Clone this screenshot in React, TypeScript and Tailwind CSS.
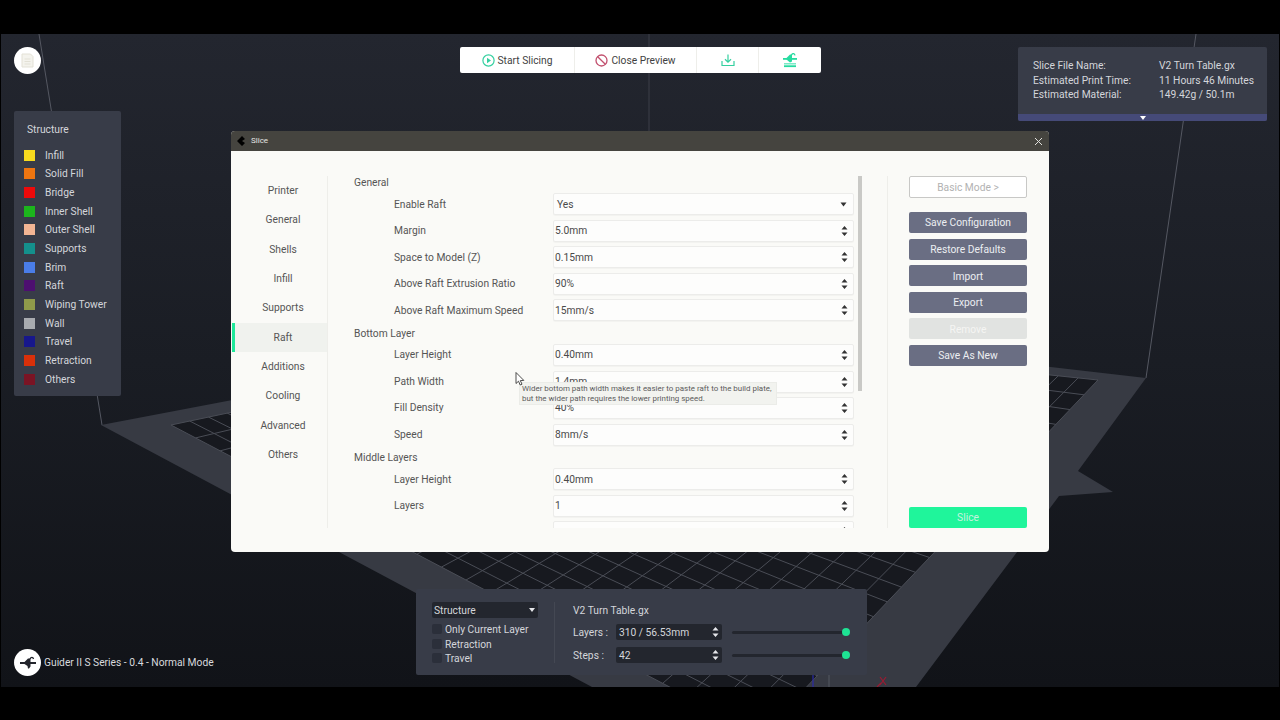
import React from "react";

const legend = [
  { name: "Infill", color: "bg-[#f7da1e]" },
  { name: "Solid Fill", color: "bg-[#ee7510]" },
  { name: "Bridge", color: "bg-[#ee0a0a]" },
  { name: "Inner Shell", color: "bg-[#1cb51c]" },
  { name: "Outer Shell", color: "bg-[#f3b594]" },
  { name: "Supports", color: "bg-[#14908c]" },
  { name: "Brim", color: "bg-[#4a7de8]" },
  { name: "Raft", color: "bg-[#4d0f70]" },
  { name: "Wiping Tower", color: "bg-[#8f9a4a]" },
  { name: "Wall", color: "bg-[#a8abb0]" },
  { name: "Travel", color: "bg-[#17178c]" },
  { name: "Retraction", color: "bg-[#d9300a]" },
  { name: "Others", color: "bg-[#7a1424]" },
];

const tabs = ["Printer", "General", "Shells", "Infill", "Supports", "Raft", "Additions", "Cooling", "Advanced", "Others"];

const groups = [
  {
    title: "General",
    rows: [
      ["Enable Raft", "Yes"],
      ["Margin", "5.0mm"],
      ["Space to Model (Z)", "0.15mm"],
      ["Above Raft Extrusion Ratio", "90%"],
      ["Above Raft Maximum Speed", "15mm/s"],
    ],
  },
  {
    title: "Bottom Layer",
    rows: [
      ["Layer Height", "0.40mm"],
      ["Path Width", "1.4mm"],
      ["Fill Density", "40%"],
      ["Speed", "8mm/s"],
    ],
  },
  {
    title: "Middle Layers",
    rows: [
      ["Layer Height", "0.40mm"],
      ["Layers", "1"],
      ["", ""],
    ],
  },
];

const lerp = (a: number[], b: number[], t: number) => [a[0] + (b[0] - a[0]) * t, a[1] + (b[1] - a[1]) * t];

// build plate corners, the grid is just bilinear between them
const L = [170, 425];
const T = [620, 330];
const R = [1097, 380];
const B = [760, 735];

function Scene() {
  const lines: number[][] = [];
  const n = 24;
  for (let i = 0; i <= n; i++) {
    const t = i / n;
    const a = lerp(L, T, t);
    const b = lerp(B, R, t);
    lines.push([a[0], a[1], b[0], b[1]]);
    const c = lerp(L, B, t);
    const d = lerp(T, R, t);
    lines.push([c[0], c[1], d[0], d[1]]);
  }
  return (
    <svg className="absolute inset-0" width="1280" height="653" viewBox="0 34 1280 653">
      <line x1="38" y1="34" x2="101" y2="425" stroke="#555862" strokeWidth="1" />
      <line x1="1195" y1="34" x2="1145" y2="378" stroke="#555862" strokeWidth="1" />
      <line x1="648" y1="34" x2="648" y2="321" stroke="#3c3f48" strokeWidth="1" />
      <polygon points="100,425 648,321 1145,378 1077,471 1112,492 1058,496 915,687 591,687" fill="#373a43" />
      <polygon points={`${L} ${T} ${R} ${B}`} fill="#17191f" />
      {lines.map((l, i) => (
        <line key={i} x1={l[0]} y1={l[1]} x2={l[2]} y2={l[3]} stroke="#4a4d56" strokeWidth="1" />
      ))}
      <line x1="812" y1="672" x2="812" y2="687" stroke="#2a2aa8" strokeWidth="1.2" />
      <line x1="828" y1="672" x2="828" y2="687" stroke="#555862" strokeWidth="1" />
      <path d="M879 677 L885 685 M885 677 L879 685 M876 687 L880 683" stroke="#9c1b32" strokeWidth="1.2" fill="none" />
    </svg>
  );
}

function Nozzle({ fill }: { fill: string }) {
  return (
    <svg width="18" height="14" viewBox="0 0 18 14">
      <rect x="1" y="6" width="16" height="2" fill={fill} />
      <path d="M5.5 6 L9 2.5 L11.5 2.5 L11.5 10.5 L10 12.5 L9 12.5 L8.5 10 L5.5 8 Z" fill={fill} />
      <path d="M11 3 C12 0.8 14 0.8 14.5 3" stroke={fill} strokeWidth="1.4" fill="none" />
    </svg>
  );
}

function Spinner({ fill }: { fill: string }) {
  return (
    <svg width="7" height="12" viewBox="0 0 7 12" className="shrink-0">
      <path d="M3.5 1 L6.5 4.5 L0.5 4.5 Z M3.5 11 L6.5 7.5 L0.5 7.5 Z" fill={fill} />
    </svg>
  );
}

function Field({ value, select }: { value: string; select?: boolean }) {
  return (
    <div className="w-[301px] h-[22px] flex items-center justify-between pl-px pr-[5px] bg-[#fdfdfc] border border-[#ececea] rounded-[2px] text-[#4a4a4a] shadow-[0_1px_1px_rgba(0,0,0,0.03)]">
      <span className={select ? "pl-[2px]" : ""}>{value}</span>
      {select ? (
        <svg width="7" height="5" viewBox="0 0 7 5" className="mr-[1px]">
          <path d="M0.5 0.5 L6.5 0.5 L3.5 4.5 Z" fill="#333" />
        </svg>
      ) : (
        <Spinner fill="#333" />
      )}
    </div>
  );
}

function SideButton({ label, className }: { label: string; className: string }) {
  return <div className={`w-[118px] h-[21px] flex items-center justify-center rounded-[2px] pt-px ${className}`}>{label}</div>;
}

export default function App() {
  return (
    <div className="w-[1280px] h-[720px] flex flex-col bg-black overflow-hidden font-['Roboto',sans-serif] text-[10.25px]">
      <div className="h-[34px] shrink-0" />
      <div className="relative flex-1 mx-px bg-gradient-to-b from-[#23262f] via-[#1a1d24] to-[#111318]">
        <Scene />

        {/* doc button */}
        <div className="absolute left-[13px] top-[13px] w-[27px] h-[27px] rounded-full bg-white flex items-center justify-center">
          <svg width="13" height="15" viewBox="0 0 13 15" fill="none" stroke="#e3e1d6" strokeWidth="1">
            <path d="M1 1 H9.5 L12 3.5 V14 H1 Z" fill="#f4f3ed" />
            <path d="M3.5 6 H9.5 M3.5 8.5 H9.5 M3.5 11 H9.5" />
          </svg>
        </div>

        {/* legend */}
        <div className="absolute left-[13px] top-[77px] w-[107px] h-[285px] bg-[#383c48] rounded-[2px] text-[#d4d6db] pl-[10px] pt-[12px]">
          <div className="pl-[3px] h-[14px] leading-[14px] mb-[9px]">Structure</div>
          <div className="flex flex-col">
            {legend.map((l) => (
              <div key={l.name} className="h-[18.67px] flex items-center gap-[10px]">
                <span className={`w-[11px] h-[11px] ${l.color}`} />
                <span>{l.name}</span>
              </div>
            ))}
          </div>
        </div>

        {/* toolbar */}
        <div className="absolute left-[459px] top-[13px] w-[361px] h-[26px] bg-white rounded-[2px] flex items-center text-[#3f3f3f]">
          <div className="w-[115px] h-full flex items-center justify-center gap-[3px] border-r border-[#eeeeea]">
            <svg width="13" height="13" viewBox="0 0 13 13">
              <circle cx="6.5" cy="6.5" r="5.6" fill="none" stroke="#35d0a0" strokeWidth="1.2" />
              <path d="M5 3.8 L9 6.5 L5 9.2 Z" fill="#35d0a0" />
            </svg>
            <span className="pt-px">Start Slicing</span>
          </div>
          <div className="w-[122px] h-full flex items-center justify-center gap-[3px] border-r border-[#eeeeea]">
            <svg width="13" height="13" viewBox="0 0 13 13" fill="none" stroke="#c2506e" strokeWidth="1.3">
              <circle cx="6.5" cy="6.5" r="5.5" />
              <path d="M2.7 2.7 L10.3 10.3" />
            </svg>
            <span className="pt-px">Close Preview</span>
          </div>
          <div className="w-[62px] h-full flex items-center justify-center border-r border-[#eeeeea]">
            <svg width="14" height="13" viewBox="0 0 14 13" fill="none" stroke="#35d0a0" strokeWidth="1.2">
              <path d="M7 0.5 V8 M4 5.3 L7 8.2 L10 5.3" />
              <path d="M1 7 V11.5 H13 V7" />
            </svg>
          </div>
          <div className="flex-1 h-full flex items-center justify-center">
            <svg width="16" height="15" viewBox="0 0 16 15">
              <rect x="1" y="5" width="14" height="1.8" fill="#26dba0" />
              <path d="M4.5 5 L8 1.5 L10 1.5 L10 8.5 L8 9.5 L4.5 6.5 Z" fill="#26dba0" />
              <path d="M9.5 2 C10.5 0 12.5 0.2 13 2.3" stroke="#26dba0" strokeWidth="1.3" fill="none" />
              <rect x="2" y="10" width="12" height="1.5" fill="#7aeac6" />
              <rect x="2" y="12.3" width="12" height="1.8" fill="#26dba0" />
            </svg>
          </div>
        </div>

        {/* slice info */}
        <div className="absolute left-[1017px] top-[13px] w-[249px] h-[74px] bg-[#383c48] rounded-[2px] overflow-hidden flex flex-col text-[#d4d6db]">
          <div className="flex-1 pl-[15px] pt-[12px] leading-[14.5px]">
            {[
              ["Slice File Name:", "V2 Turn Table.gx"],
              ["Estimated Print Time:", "11 Hours 46 Minutes"],
              ["Estimated Material:", "149.42g / 50.1m"],
            ].map((r) => (
              <div key={r[0]} className="flex">
                <span className="w-[126px]">{r[0]}</span>
                <span>{r[1]}</span>
              </div>
            ))}
          </div>
          <div className="h-[7px] bg-[#454a78] flex items-center justify-center">
            <svg width="6" height="4" viewBox="0 0 6 4">
              <path d="M0 0 H6 L3 4 Z" fill="#fff" />
            </svg>
          </div>
        </div>

        {/* machine label */}
        <div className="absolute left-[13px] top-[615px] h-[27px] flex items-center gap-[3px] text-[#d8dade]">
          <div className="w-[27px] h-[27px] rounded-full bg-white flex items-center justify-center">
            <Nozzle fill="#23252c" />
          </div>
          <span>Guider II S Series - 0.4 - Normal Mode</span>
        </div>

        {/* slice dialog */}
        <div className="absolute left-[230px] top-[97px] w-[818px] h-[421px] flex flex-col rounded-[4px] overflow-hidden bg-[#fafaf7] text-[#555]">
          <div className="h-[20px] shrink-0 bg-[#45443f] flex items-center justify-between pl-[6px] pr-[6px] text-[#e6e6e2] text-[8px]">
            <div className="flex items-center gap-[6px]">
              <svg width="8" height="10" viewBox="0 0 8 10">
                <path d="M5 0 L0 5 L5 10 L8 7 L5 5 L8 3 Z" fill="#000" />
              </svg>
              <span>Slice</span>
            </div>
            <svg width="9" height="9" viewBox="0 0 9 9" stroke="#e0e0dc" strokeWidth="1">
              <path d="M1 1 L8 8 M8 1 L1 8" />
            </svg>
          </div>
          <div className="flex-1 flex pt-[25px] pb-[24px] min-h-0">
            {/* tabs */}
            <div className="w-[97px] shrink-0 border-r border-[#eeeeea] pl-px">
              {tabs.map((t) => (
                <div
                  key={t}
                  className={
                    t === "Raft"
                      ? "h-[29.35px] flex items-center justify-center border-l-[3px] border-[#1ee89a] bg-[#f0f2ee] pl-[4px]"
                      : "h-[29.35px] flex items-center justify-center border-l-[3px] border-transparent pl-[4px]"
                  }
                >
                  {t}
                </div>
              ))}
            </div>
            {/* settings */}
            <div className="w-[560px] shrink-0 relative pl-[26px] border-r border-[#eeeeea] mr-[21px] overflow-hidden">
              <div className="flex flex-col">
                {groups.map((g) => (
                  <div key={g.title}>
                    <div className="h-[14px] leading-[14px] mb-[1px]">{g.title}</div>
                    <div className="flex flex-col mb-[3.25px]">
                      {g.rows.map((r, i) => (
                        <div key={i} className="h-[26.5px] flex items-center">
                          <span className="w-[159px] pl-[40px] box-content shrink-0">{r[0]}</span>
                          <Field value={r[1]} select={r[0] === "Enable Raft"} />
                        </div>
                      ))}
                    </div>
                  </div>
                ))}
              </div>
              <div className="absolute left-[530px] top-0 w-[4px] h-[215px] bg-[#c9c9c6]" />
            </div>
            {/* actions */}
            <div className="flex flex-col w-[118px] shrink-0">
              <SideButton label="Basic Mode >" className="bg-white border border-[#c8c8c6] text-[#b2b2b2] h-[22px]" />
              <div className="mt-[14px] flex flex-col gap-[5.6px] text-[#eceef2]">
                <SideButton label="Save Configuration" className="bg-[#6a6e83]" />
                <SideButton label="Restore Defaults" className="bg-[#6a6e83]" />
                <SideButton label="Import" className="bg-[#6a6e83]" />
                <SideButton label="Export" className="bg-[#6a6e83]" />
                <SideButton label="Remove" className="bg-[#e1e3e1] text-[#f5f5f3]" />
                <SideButton label="Save As New" className="bg-[#6a6e83]" />
              </div>
              <SideButton label="Slice" className="mt-auto bg-[#1ff59b] text-[#c6f3df]" />
            </div>
          </div>
        </div>

        {/* tooltip + cursor */}
        <div className="absolute left-[518px] top-[348px] w-[258px] h-[23px] bg-[#f2f3ef] border border-[#ebece8] text-[#5c5c5c] text-[7.95px] leading-[10px] pl-[2px] pt-px whitespace-nowrap">
          <div>Wider bottom path width makes it easier to paste raft to the build plate,</div>
          <div>but the wider path requires the lower printing speed.</div>
        </div>
        <svg className="absolute left-[514px] top-[338px]" width="10" height="14" viewBox="0 0 10 14">
          <path d="M1 0.5 V11.5 L3.5 9.2 L5.2 13 L7 12.2 L5.3 8.6 L8.8 8.4 Z" fill="#fff" stroke="#222" strokeWidth="0.8" />
        </svg>

        {/* preview controls */}
        <div className="absolute left-[415px] top-[555px] w-[451px] h-[86px] bg-[#383c48] rounded-[2px] flex text-[#d4d6db] pl-[16px] pt-[13px]">
          <div className="w-[123px] shrink-0 border-r border-[#444853] h-[61px] pr-[16px]">
            <div className="h-[16px] bg-[#23262e] rounded-[2px] flex items-center justify-between pl-[2px] pr-[3px]">
              <span className="pt-px">Structure</span>
              <svg width="6" height="4" viewBox="0 0 6 4">
                <path d="M0 0 H6 L3 4 Z" fill="#e5e6ea" />
              </svg>
            </div>
            <div className="mt-[4px] flex flex-col">
              {["Only Current Layer", "Retraction", "Travel"].map((c) => (
                <div key={c} className="h-[14.6px] flex items-center gap-[3px]">
                  <span className="w-[10px] h-[10px] rounded-[2px] bg-[#2b2f3a]" />
                  <span className="pt-px">{c}</span>
                </div>
              ))}
            </div>
          </div>
          <div className="pl-[18px] flex-1 flex flex-col">
            <div className="h-[16px] flex items-center pt-px">V2 Turn Table.gx</div>
            {[
              ["Layers :", "310 / 56.53mm"],
              ["Steps :", "42"],
            ].map((r, i) => (
              <div key={r[0]} className={i === 0 ? "mt-[6px] flex items-center" : "mt-[6.5px] flex items-center"}>
                <span className="w-[43px] shrink-0 pt-px">{r[0]}</span>
                <div className="w-[106px] h-[16px] bg-[#23262e] rounded-[2px] flex items-center justify-between pl-[3px] pr-[3px] shrink-0">
                  <span className="pt-px">{r[1]}</span>
                  <Spinner fill="#e5e6ea" />
                </div>
                <div className="relative ml-[10px] w-[114px] h-[3px] bg-[#23262e] rounded-full">
                  <span className="absolute right-[-4px] top-[-2.5px] w-[8px] h-[8px] rounded-full bg-[#1ee394]" />
                </div>
              </div>
            ))}
          </div>
        </div>
      </div>
      <div className="h-[33px] shrink-0" />
    </div>
  );
}
